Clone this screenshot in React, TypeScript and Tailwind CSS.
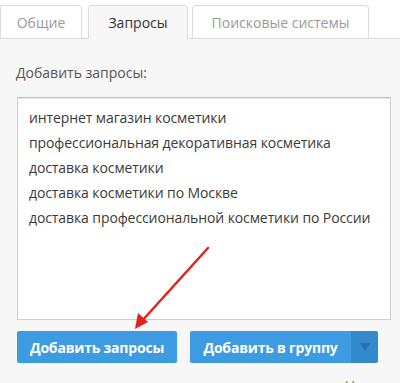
import React from 'react';

const queries = [
  'интернет магазин косметики',
  'профессиональная декоративная косметика',
  'доставка косметики',
  'доставка косметики по Москве',
  'доставка профессиональной косметики по России',
];

const App: React.FC = () => {
  return (
    <div className="relative w-[400px] h-[383px] overflow-hidden bg-white font-['Open_Sans',sans-serif]">
      {/* Tabs */}
      <div className="flex items-end h-[38px]">
        <div className="w-[82px] h-[33px] border border-b-0 border-[#dcdcdc] rounded-tr-[4px] bg-white flex items-center justify-center text-[14px] text-[#9a9a9a]">
          Общие
        </div>
        <div className="relative -mb-px ml-[6px] w-[100px] h-[34px] border border-b-0 border-[#dcdcdc] rounded-t-[4px] bg-[#f7f7f7] flex items-center justify-center text-[14px] text-[#333]">
          Запросы
        </div>
        <div className="ml-[4px] w-[177px] h-[33px] border border-b-0 border-[#dcdcdc] rounded-t-[4px] bg-white flex items-center justify-center text-[14px] text-[#9a9a9a]">
          Поисковые системы
        </div>
      </div>

      {/* Panel */}
      <div className="border-t border-[#dcdcdc] bg-[#f7f7f7] h-[345px] pl-[17px] pr-[9px]">
        <div className="pt-[24px] text-[14px] text-[#555] leading-[20px] -ml-px">Добавить запросы:</div>
        <div className="mt-[14px] h-[223px] bg-white border border-[#cfcfcf] border-t-[#bdbdbd] shadow-[inset_0_1px_1px_rgba(0,0,0,0.08)] pl-[11px] pt-[7px]">
          {queries.map((q) => (
            <div key={q} className="text-[14px] leading-[25px] text-[#3a3a3a] tracking-[-0.1px]">
              {q}
            </div>
          ))}
        </div>
        <div className="flex mt-[11px] gap-[13px]">
          <button className="w-[160px] h-[32px] rounded-[2px] bg-[#3d9be2] text-white text-[14px] font-bold tracking-[-0.2px]">
            Добавить запросы
          </button>
          <div className="flex w-[188px] h-[32px] rounded-[2px] overflow-hidden">
            <button className="flex-1 bg-[#3d9be2] text-white text-[14px] font-bold tracking-[-0.2px]">Добавить в группу</button>
            <div className="w-[27px] bg-[#3489cd] flex items-center justify-center">
              <svg width="10" height="8" viewBox="0 0 10 8">
                <path d="M0 0 H10 L5 8 Z" fill="#2a6fa8" />
              </svg>
            </div>
          </div>
        </div>
        <div className="flex justify-end pr-[36px] mt-[13px] text-[14px] text-[#3f9a2b] leading-[20px]">Н</div>
      </div>

      {/* Red arrow */}
      <svg className="absolute left-0 top-0 pointer-events-none" width="400" height="383">
        <line x1="208" y1="248" x2="141" y2="322" stroke="#e4211c" strokeWidth="2.5" strokeLinecap="round" />
        <path d="M135 329 L138 313 L148 322 Z" fill="#e4211c" />
      </svg>
    </div>
  );
};

export default App;
